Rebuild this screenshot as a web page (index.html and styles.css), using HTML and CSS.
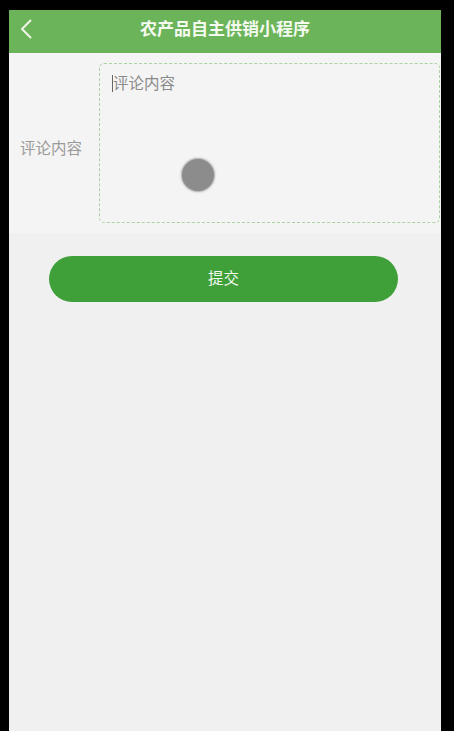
FILE: index.html
```html
<!DOCTYPE html>
<html lang="zh">
<head>
<meta charset="utf-8">
<title>农产品自主供销小程序</title>
<link rel="stylesheet" href="styles.css">
</head>
<body>
<div class="phone">
  <header class="nav">
    <svg class="back" viewBox="0 0 12 20" width="12" height="20"><path d="M10.5 1.5 L2 10 L10.5 18.5" fill="none" stroke="#eef6e6" stroke-width="2" stroke-linecap="round" stroke-linejoin="round"/></svg>
    <h1 class="title">农产品自主供销小程序</h1>
  </header>
  <section class="form-row">
    <div class="label">评论内容</div>
    <div class="textarea">
      <span class="caret"></span><span class="placeholder">评论内容</span>
      <span class="touch"></span>
    </div>
  </section>
  <button class="submit">提交</button>
</div>
</body>
</html>
```
FILE: styles.css
```css
html, body {
  margin: 0;
  padding: 0;
  background: #000;
  height: 100%;
  overflow: hidden;
}
body {
  font-family: "Noto Sans CJK SC", "Noto Sans", sans-serif;
}
.phone {
  margin: 10px 13px 0 9px;
  background: #f0f0f0;
  height: 721px;
  display: flex;
  flex-direction: column;
}
.nav {
  height: 43px;
  background: #6cb45a;
  display: flex;
  align-items: center;
  justify-content: center;
  position: relative;
}
.back {
  position: absolute;
  left: 11px;
  top: 9px;
}
.title {
  margin: 0 0 7px 0;
  font-size: 17px;
  line-height: 22px;
  font-weight: 700;
  color: #f4faf0;
  letter-spacing: 0;
}
.form-row {
  background: #f4f4f4;
  display: flex;
  padding: 10px 1px 10px 0;
}
.label {
  width: 90px;
  box-sizing: border-box;
  padding: 7px 0 0 11px;
  align-self: center;
  font-size: 15.5px;
  color: #9a9a9a;
  white-space: nowrap;
}
.textarea {
  flex: 1;
  height: 160px;
  box-sizing: border-box;
  border: 1px dashed #a9d3a0;
  border-radius: 5px;
  padding: 8px 12px;
  position: relative;
  font-size: 15.5px;
  line-height: 20px;
  color: #8a8a8a;
  display: flex;
  align-items: flex-start;
}
.caret {
  width: 1px;
  height: 17px;
  margin-top: 3px;
  background: #666;
}
.touch {
  position: absolute;
  left: 82px;
  top: 95px;
  width: 32px;
  height: 32px;
  border-radius: 50%;
  background: #8c8c8c;
  box-shadow: 0 0 2px 1px #a8a8a8;
}
.submit {
  margin: 23px 43px 0 40px;
  height: 46px;
  border: none;
  border-radius: 23px;
  background: #3f9f39;
  color: #f2f8ee;
  font-family: "Noto Sans CJK SC", "Noto Sans", sans-serif;
  font-size: 15.5px;
  line-height: 20px;
  padding: 0 0 5px 0;
}
```
